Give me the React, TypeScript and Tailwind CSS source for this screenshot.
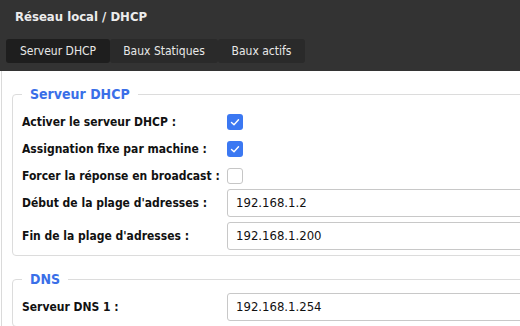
import React from "react";

type Row =
  | { label: string; kind: "check"; checked: boolean }
  | { label: string; kind: "input"; value: string };

const dhcpRows: Row[] = [
  { label: "Activer le serveur DHCP :", kind: "check", checked: true },
  { label: "Assignation fixe par machine :", kind: "check", checked: true },
  { label: "Forcer la réponse en broadcast :", kind: "check", checked: false },
  { label: "Début de la plage d'adresses :", kind: "input", value: "192.168.1.2" },
  { label: "Fin de la plage d'adresses :", kind: "input", value: "192.168.1.200" },
];

function Checkbox({ checked }: { checked: boolean }) {
  if (!checked) {
    return <span className="block w-[16px] h-[16px] rounded-[3px] border border-[#c6c6c6] bg-white" />;
  }
  return (
    <span className="flex w-[16px] h-[16px] rounded-[3px] bg-[#3b78f2] items-center justify-center">
      <svg width="16" height="16" viewBox="0 0 16 16" fill="none">
        <polyline points="4.5,8.5 7,10.8 11.5,5.8" stroke="white" strokeWidth="1.4" strokeLinecap="round" strokeLinejoin="round" />
      </svg>
    </span>
  );
}

function Field({ row, first }: { row: Row; first?: boolean }) {
  if (row.kind === "check") {
    return (
      <div className={`flex items-center h-[27px] ${first ? "mt-[5px]" : ""}`}>
        <span className="w-[205px] font-bold text-[12px] text-[#111]">{row.label}</span>
        <Checkbox checked={row.checked} />
      </div>
    );
  }
  return (
    <div className={`flex items-center h-[28px] ${first ? "mt-[5px]" : ""}`}>
      <span className="w-[205px] font-bold text-[12px] text-[#111]">{row.label}</span>
      <div className="h-[28px] w-[480px] flex items-center pl-[8px] border border-[#c8c8c8] rounded-[3px] text-[13px] text-[#111]">
        {row.value}
      </div>
    </div>
  );
}

function Section({ title, children, className }: { title: string; children: React.ReactNode; className?: string }) {
  return (
    <fieldset className={`border border-[#dcdcdc] rounded-[4px] px-[9px] pb-[5px] ${className ?? ""}`}>
      <legend className="px-[8px] text-[14px] leading-[18px] font-bold text-[#3a6fe8]">{title}</legend>
      {children}
    </fieldset>
  );
}

export default function App() {
  return (
    <div className="w-[520px] h-[326px] overflow-hidden bg-white" style={{ fontFamily: '"DejaVu Sans Condensed", "DejaVu Sans", sans-serif' }}>
      <div className="w-[760px]">
        <div className="bg-[#333333] h-[71px]">
          <div className="pl-[15px] pt-[8px] h-[39px] text-[13px] leading-[17px] font-bold text-[#ececec]">
            Réseau local / DHCP
          </div>
          <div className="flex pl-[6px]">
            <div className="w-[104px] h-[24px] rounded-[3px] bg-[#1e1e1e] flex items-center justify-center text-[12px] text-[#e8e8e8]">
              Serveur DHCP
            </div>
            <div className="w-[108px] h-[24px] rounded-[3px] bg-[#2a2a2a] flex items-center justify-center text-[12px] text-[#e8e8e8]">
              Baux Statiques
            </div>
            <div className="w-[87px] h-[24px] rounded-[3px] bg-[#2a2a2a] flex items-center justify-center text-[12px] text-[#e8e8e8]">
              Baux actifs
            </div>
          </div>
        </div>
        <div className="ml-[1px] border-l border-[#dadada] pl-[10px] pt-[14px] h-[260px]">
          <Section title="Serveur DHCP">
            {dhcpRows.map((r, i) => (
              <div key={r.label} className={i === 4 ? "mt-[5px]" : ""}>
                <Field row={r} first={i === 0} />
              </div>
            ))}
          </Section>
          <Section title="DNS" className="mt-[14px]">
            <Field row={{ label: "Serveur DNS 1 :", kind: "input", value: "192.168.1.254" }} first />
          </Section>
        </div>
      </div>
    </div>
  );
}
